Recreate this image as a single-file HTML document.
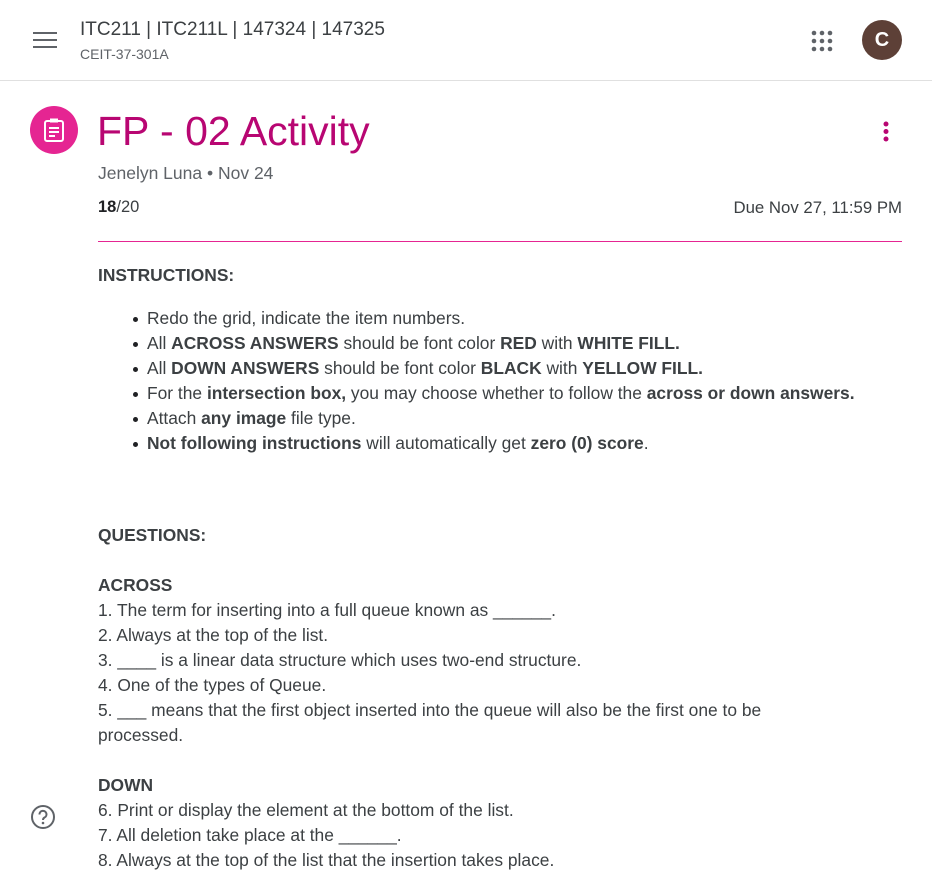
<!DOCTYPE html>
<html><head><meta charset="utf-8"><style>
*{margin:0;padding:0;box-sizing:border-box}
html,body{width:932px;height:860px;overflow:hidden;background:#fff;font-family:"Liberation Sans",sans-serif;color:#3c4043}
.hdr{position:absolute;left:0;top:0;width:932px;height:81px;border-bottom:1px solid #e0e0e0}
.ab{position:absolute}
b{font-weight:bold}
.body{position:absolute;left:98px;top:263px;width:800px;font-size:17.4px;line-height:25px;color:#3c4043}
ul{margin-left:49px;list-style:none}
li{position:relative}
li:before{content:"";position:absolute;left:-14px;top:11px;width:5px;height:5px;border-radius:50%;background:#202124}
</style></head><body>
<div class="hdr">
 <svg class="ab" style="left:33px;top:32px" width="24" height="16"><rect y="0" width="24" height="2" fill="#5f6368"/><rect y="7" width="24" height="2" fill="#5f6368"/><rect y="14" width="24" height="2" fill="#5f6368"/></svg>
 <div class="ab" style="left:80px;top:19px;font-size:19px;color:#3c4043">ITC211 | ITC211L | 147324 | 147325</div>
 <div class="ab" style="left:80px;top:46px;font-size:14px;color:#5f6368">CEIT-37-301A</div>
 <svg class="ab" style="left:811px;top:30px" width="22" height="22" fill="#5f6368">
  <circle cx="3" cy="3" r="2.3"/><circle cx="11" cy="3" r="2.3"/><circle cx="19" cy="3" r="2.3"/>
  <circle cx="3" cy="11" r="2.3"/><circle cx="11" cy="11" r="2.3"/><circle cx="19" cy="11" r="2.3"/>
  <circle cx="3" cy="19" r="2.3"/><circle cx="11" cy="19" r="2.3"/><circle cx="19" cy="19" r="2.3"/></svg>
 <div class="ab" style="left:862px;top:20px;width:40px;height:40px;border-radius:50%;background:#5d4037;color:#fff;font-size:20px;font-weight:bold;line-height:40px;text-align:center">C</div>
</div>
<div class="ab" style="left:30px;top:106px;width:48px;height:48px;border-radius:50%;background:#e52592"></div>
<svg class="ab" style="left:42px;top:117px" width="24" height="26" fill="none" stroke="#fff" stroke-width="2"><rect x="3" y="4" width="18" height="20" rx="2"/><rect x="8" y="1.5" width="8" height="4" fill="#fff" stroke="none"/><path d="M7 11h10M7 15h10M7 19h6"/></svg>
<div class="ab" style="left:97px;top:108px;font-size:41px;color:#b80672">FP - 02 Activity</div>
<svg class="ab" style="left:882px;top:120px" width="8" height="24" fill="#b80672"><circle cx="4" cy="4" r="2.5"/><circle cx="4" cy="11.5" r="2.5"/><circle cx="4" cy="19" r="2.5"/></svg>
<div class="ab" style="left:98px;top:163px;font-size:17.5px;color:#5f6368">Jenelyn Luna • Nov 24</div>
<div class="ab" style="left:98px;top:198px;font-size:16.5px;color:#3c4043"><b style="color:#202124">18</b>/20</div>
<div class="ab" style="right:30px;top:198px;font-size:16.8px;color:#3c4043">Due Nov 27, 11:59 PM</div>
<div class="ab" style="left:98px;top:241px;width:804px;height:0;border-top:1px solid #e52592"></div>
<div class="body">
<div><b>INSTRUCTIONS:</b></div>
<div style="height:18px"></div>
<ul>
<li>Redo the grid, indicate the item numbers.</li>
<li>All <b>ACROSS ANSWERS</b> should be font color <b>RED</b> with <b>WHITE FILL.</b></li>
<li>All <b>DOWN ANSWERS</b> should be font color <b>BLACK</b> with <b>YELLOW FILL.</b></li>
<li>For the <b>intersection box,</b> you may choose whether to follow the <b>across or down answers.</b></li>
<li>Attach <b>any image</b> file type.</li>
<li><b>Not following instructions</b> will automatically get <b>zero (0) score</b>.</li>
</ul>
<div style="height:67px"></div>
<div><b>QUESTIONS:</b></div>
<div>&nbsp;</div>
<div><b>ACROSS</b></div>
<div>1. The term for inserting into a full queue known as ______.</div>
<div>2. Always at the top of the list.</div>
<div>3. ____ is a linear data structure which uses two-end structure.</div>
<div>4. One of the types of Queue.</div>
<div>5. ___ means that the first object inserted into the queue will also be the first one to be<br>processed.</div>
<div>&nbsp;</div>
<div><b>DOWN</b></div>
<div>6. Print or display the element at the bottom of the list.</div>
<div>7. All deletion take place at the ______.</div>
<div>8. Always at the top of the list that the insertion takes place.</div>
</div>
<svg class="ab" style="left:30px;top:804px" width="26" height="26"><circle cx="13" cy="13" r="11" fill="none" stroke="#5f6368" stroke-width="2"/><path d="M9.5 10.5a3.5 3.5 0 1 1 5 3c-1.2.7-1.5 1.2-1.5 2.5" fill="none" stroke="#5f6368" stroke-width="2"/><circle cx="13" cy="19" r="1.3" fill="#5f6368"/></svg>
</body></html>
